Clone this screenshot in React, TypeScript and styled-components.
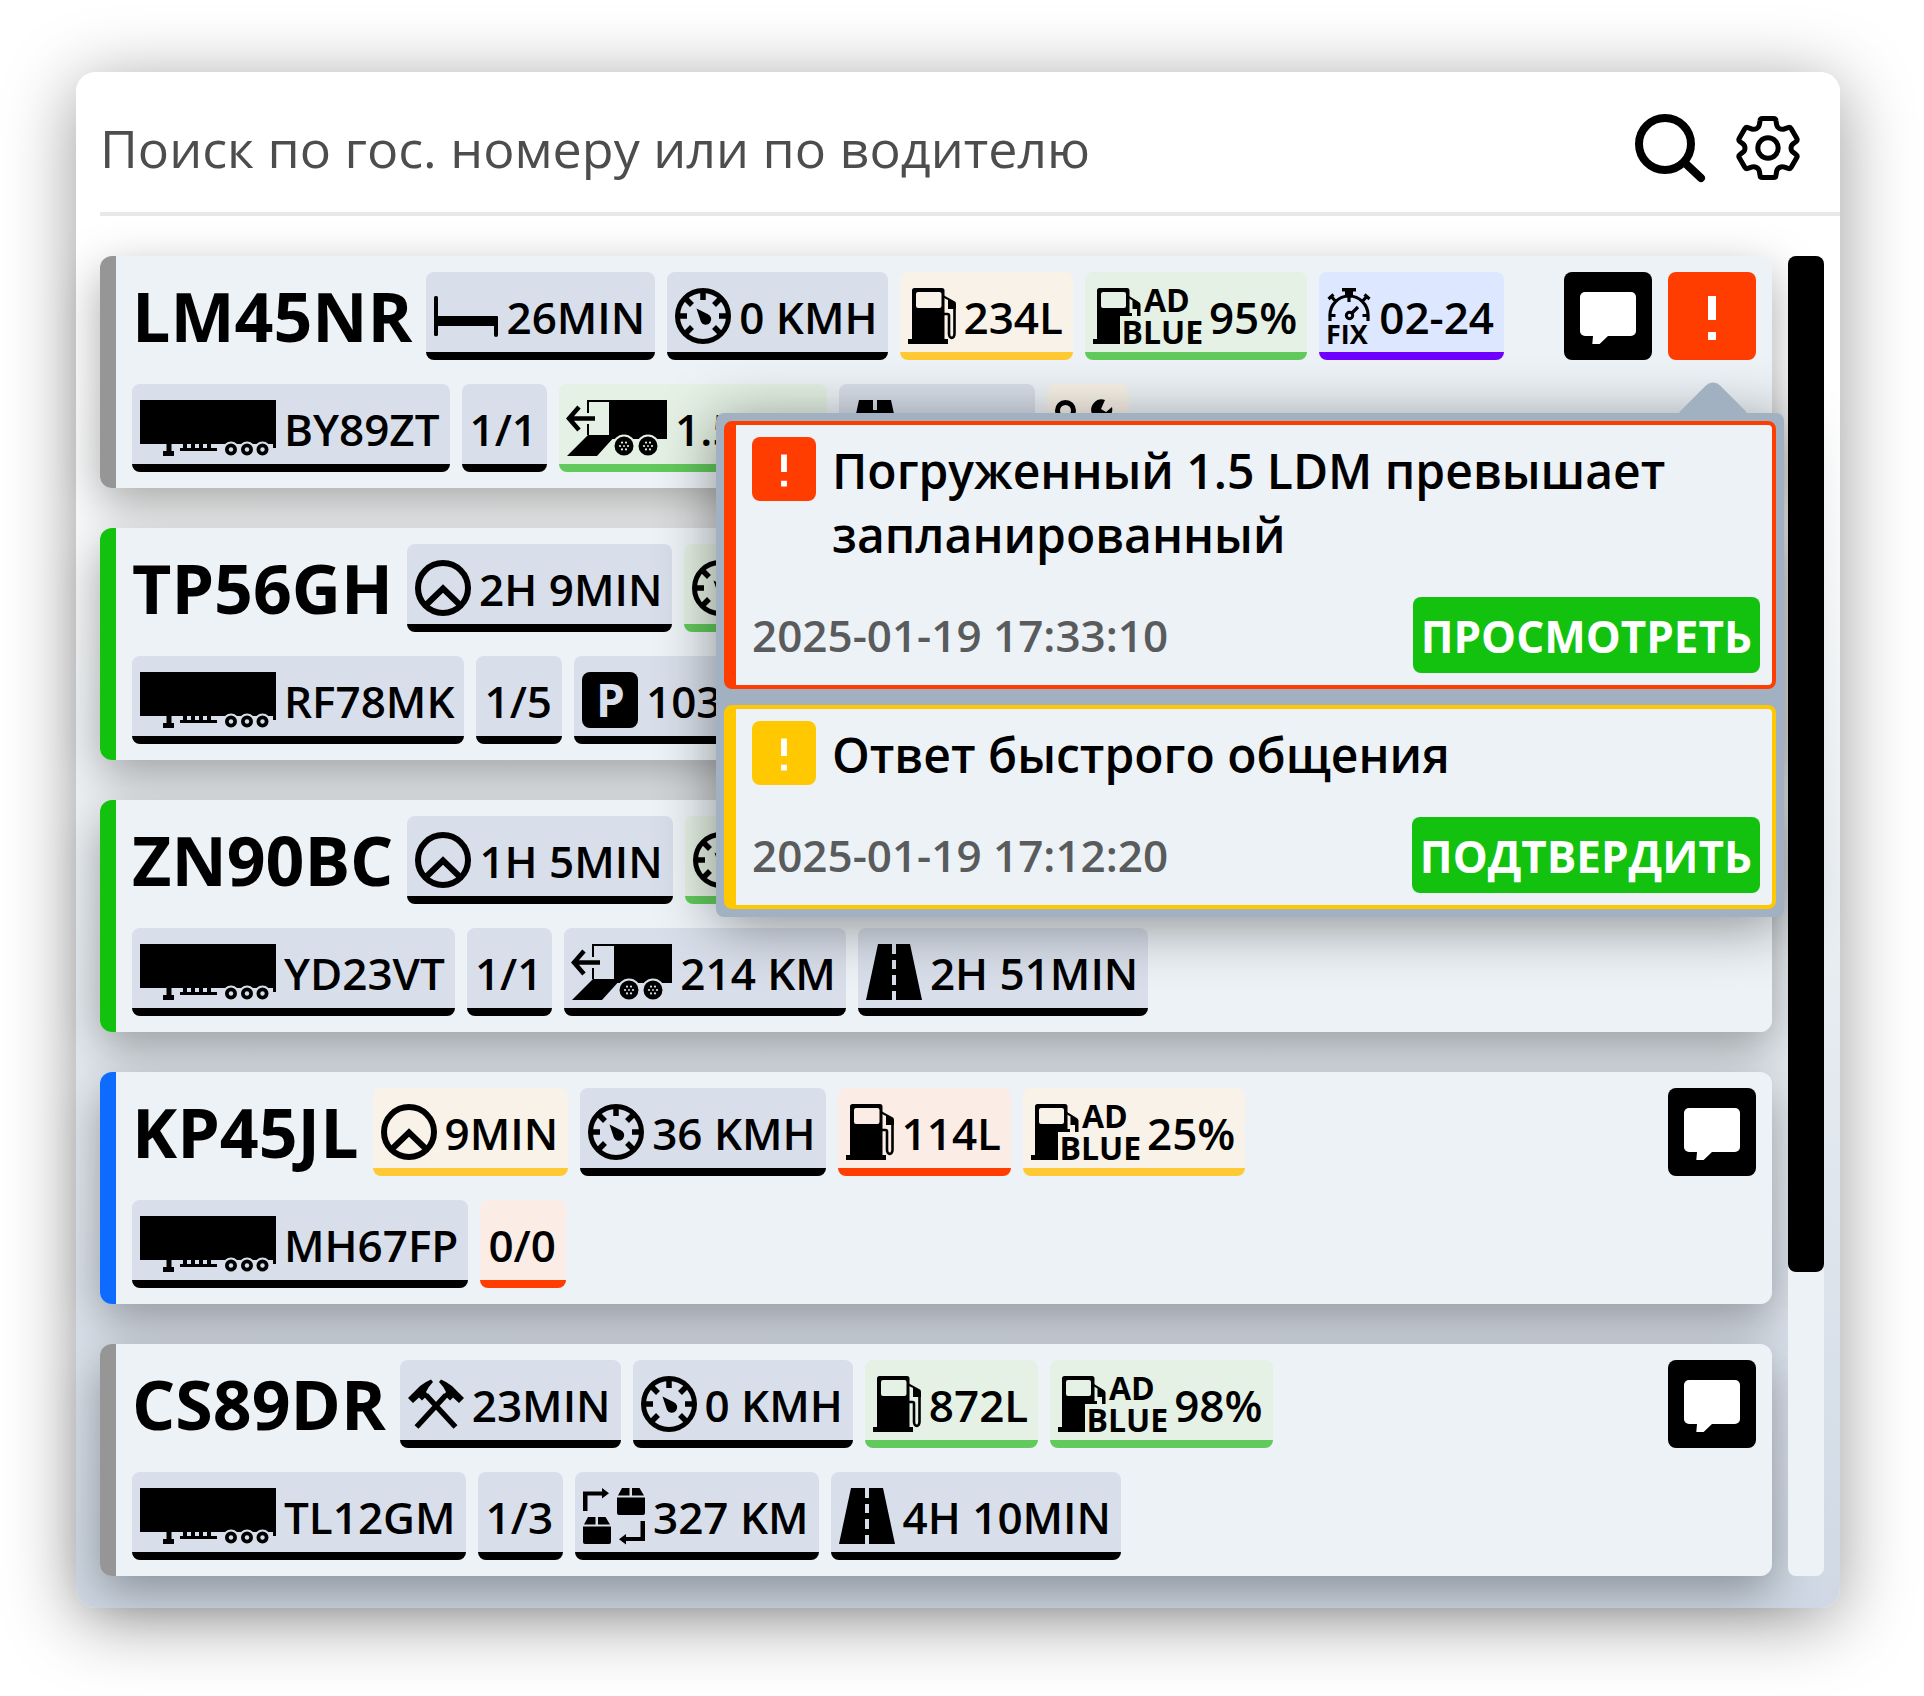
import React from "react";
import styled, { createGlobalStyle, css } from "styled-components";

type Tone = "neutral" | "amber" | "green" | "violet" | "red";
type IconName =
  | "bed"
  | "gauge"
  | "fuel"
  | "adblue"
  | "fix"
  | "trailer"
  | "unload"
  | "road"
  | "service"
  | "wheel"
  | "parking"
  | "hammers"
  | "exchange";

interface ChipData {
  icon?: IconName;
  text?: string;
  tone?: Tone;
}

interface AlertData {
  color: string;
  text: string;
  time: string;
  action: string;
}

interface Vehicle {
  plate: string;
  status: string;
  main: ChipData[];
  extra: ChipData[];
  chat?: boolean;
  alerts?: AlertData[];
}

const tones: Record<Tone, { bg: string; line: string }> = {
  neutral: { bg: "#d8dfea", line: "#000000" },
  amber: { bg: "#f8f2e8", line: "#ffc933" },
  green: { bg: "#e5f1e4", line: "#62c95c" },
  violet: { bg: "#dde7ff", line: "#6f00ff" },
  red: { bg: "#fbece5", line: "#ff3d00" },
};

const GREY = "#969696";
const GREEN = "#13c20e";
const BLUE = "#0d6bff";
const RED = "#ff3d00";
const YELLOW = "#ffc800";

const vehicles: Vehicle[] = [
  {
    plate: "LM45NR",
    status: GREY,
    main: [
      { icon: "bed", text: "26MIN" },
      { icon: "gauge", text: "0 KMH" },
      { icon: "fuel", text: "234L", tone: "amber" },
      { icon: "adblue", text: "95%", tone: "green" },
      { icon: "fix", text: "02-24", tone: "violet" },
    ],
    extra: [
      { icon: "trailer", text: "BY89ZT" },
      { text: "1/1" },
      { icon: "unload", text: "1.5 KM", tone: "green" },
      { icon: "road", text: "2MIN" },
      { icon: "service", tone: "amber" },
    ],
    chat: true,
    alerts: [
      {
        color: RED,
        text: "Погруженный 1.5 LDM превышает запланированный",
        time: "2025-01-19 17:33:10",
        action: "ПРОСМОТРЕТЬ",
      },
      {
        color: YELLOW,
        text: "Ответ быстрого общения",
        time: "2025-01-19 17:12:20",
        action: "ПОДТВЕРДИТЬ",
      },
    ],
  },
  {
    plate: "TP56GH",
    status: GREEN,
    main: [
      { icon: "wheel", text: "2H 9MIN" },
      { icon: "gauge", text: "85 KMH", tone: "green" },
    ],
    extra: [
      { icon: "trailer", text: "RF78MK" },
      { text: "1/5" },
      { icon: "parking", text: "103 KM" },
    ],
  },
  {
    plate: "ZN90BC",
    status: GREEN,
    main: [
      { icon: "wheel", text: "1H 5MIN" },
      { icon: "gauge", text: "82 KMH", tone: "green" },
    ],
    extra: [
      { icon: "trailer", text: "YD23VT" },
      { text: "1/1" },
      { icon: "unload", text: "214 KM" },
      { icon: "road", text: "2H 51MIN" },
    ],
  },
  {
    plate: "KP45JL",
    status: BLUE,
    main: [
      { icon: "wheel", text: "9MIN", tone: "amber" },
      { icon: "gauge", text: "36 KMH" },
      { icon: "fuel", text: "114L", tone: "red" },
      { icon: "adblue", text: "25%", tone: "amber" },
    ],
    extra: [{ icon: "trailer", text: "MH67FP" }, { text: "0/0", tone: "red" }],
    chat: true,
  },
  {
    plate: "CS89DR",
    status: GREY,
    main: [
      { icon: "hammers", text: "23MIN" },
      { icon: "gauge", text: "0 KMH" },
      { icon: "fuel", text: "872L", tone: "green" },
      { icon: "adblue", text: "98%", tone: "green" },
    ],
    extra: [
      { icon: "trailer", text: "TL12GM" },
      { text: "1/3" },
      { icon: "exchange", text: "327 KM" },
      { icon: "road", text: "4H 10MIN" },
    ],
    chat: true,
  },
];

const GlobalStyle = createGlobalStyle`
  *, *::before, *::after { box-sizing: border-box; }
  body {
    margin: 0;
    background: #ffffff;
    color: #000000;
    font-family: "Open Sans", "Noto Sans", sans-serif;
  }
`;

const Page = styled.main`
  padding: 72px 84px 88px 76px;
`;

const Panel = styled.section`
  border-radius: 20px;
  background: linear-gradient(#ffffff 20%, #e9eef2 56%, #dde4ec 77%, #cfd8e4 100%);
  box-shadow: 0 12px 72px rgba(0, 0, 0, 0.4);
`;

const Header = styled.header`
  display: flex;
  align-items: center;
  gap: 30px;
  height: 144px;
  margin-left: 24px;
  padding-top: 12px;
  padding-right: 40px;
  border-bottom: 4px solid #e8e8e8;
`;

const SearchInput = styled.input`
  flex: 1;
  min-width: 0;
  height: 80px;
  padding: 0;
  border: 0;
  outline: 0;
  background: transparent;
  font: 400 52px/80px "Open Sans", "Noto Sans", sans-serif;
  color: #4d4d4d;
  &::placeholder {
    color: #4d4d4d;
    opacity: 1;
  }
`;

const plainButton = css`
  display: flex;
  align-items: center;
  justify-content: center;
  margin: 0;
  padding: 0;
  border: 0;
  cursor: pointer;
`;

const HeaderButton = styled.button`
  ${plainButton}
  background: transparent;
  color: #000000;
`;

const Content = styled.div`
  display: flex;
  gap: 16px;
  padding: 40px 16px 32px 24px;
  isolation: isolate;
`;

const List = styled.ul`
  flex: 1;
  min-width: 0;
  display: flex;
  flex-direction: column;
  gap: 40px;
  margin: 0;
  padding: 0;
  list-style: none;
`;

const Card = styled.li<{ $status: string }>`
  position: relative;
  display: flex;
  justify-content: space-between;
  padding: 16px;
  border-left: 16px solid ${(p) => p.$status};
  border-radius: 12px;
  background: #ecf2f6;
  &::before {
    content: "";
    position: absolute;
    inset: 0 0 0 -16px;
    z-index: -1;
    border-radius: 12px;
    box-shadow: 0 16px 48px rgba(0, 0, 0, 0.34);
  }
`;

const Rows = styled.div`
  display: flex;
  flex-direction: column;
  gap: 24px;
`;

const Row = styled.div`
  display: flex;
  gap: 12px;
`;

const Plate = styled.h2`
  margin: 0 2px 0 0;
  font-size: 68px;
  line-height: 88px;
  font-weight: 700;
`;

const ChipBox = styled.span<{ $tone: Tone }>`
  --chip: ${(p) => tones[p.$tone].bg};
  display: flex;
  gap: 8px;
  height: 88px;
  padding: 16px 10px 8px 8px;
  border-bottom: 8px solid ${(p) => tones[p.$tone].line};
  border-radius: 8px;
  background: var(--chip);
  font-size: 44px;
  line-height: 58px;
  font-weight: 600;
  white-space: nowrap;
`;

const Actions = styled.div`
  position: relative;
  display: flex;
  align-items: flex-start;
  gap: 16px;
`;

const ActionButton = styled.button<{ $bg: string }>`
  ${plainButton}
  width: 88px;
  height: 88px;
  border-radius: 8px;
  background: ${(p) => p.$bg};
`;

const Popup = styled.div`
  position: absolute;
  z-index: 10;
  top: 141px;
  right: -28px;
  width: 1068px;
  display: flex;
  flex-direction: column;
  gap: 16px;
  padding: 8px;
  border-radius: 8px;
  background: #a1b1c2;
  box-shadow: 0 8px 60px rgba(0, 0, 0, 0.42);
  &::before {
    content: "";
    position: absolute;
    z-index: -1;
    top: -23px;
    right: 43px;
    width: 56px;
    height: 56px;
    border-radius: 10px;
    background: #a1b1c2;
    transform: rotate(45deg);
  }
`;

const AlertCard = styled.article<{ $color: string }>`
  display: flex;
  flex-direction: column;
  gap: 32px;
  padding: 12px 12px 12px 16px;
  border: 4px solid ${(p) => p.$color};
  border-left-width: 12px;
  border-radius: 8px;
  background: #ecf2f6;
`;

const AlertTop = styled.div`
  display: flex;
  align-items: flex-start;
  gap: 16px;
`;

const AlertBadge = styled.span<{ $color: string }>`
  flex: none;
  display: flex;
  border-radius: 8px;
  background: ${(p) => p.$color};
`;

const AlertText = styled.p`
  margin: 2px 0 -2px;
  font-size: 48px;
  line-height: 64px;
  font-weight: 600;
`;

const AlertBottom = styled.div`
  display: flex;
  align-items: center;
  justify-content: space-between;
`;

const AlertTime = styled.time`
  font-size: 44px;
  line-height: 76px;
  font-weight: 600;
  color: #595b5c;
`;

const AlertAction = styled.button`
  ${plainButton}
  height: 76px;
  padding: 2px 8px 0;
  border-radius: 8px;
  background: ${GREEN};
  color: #ffffff;
  font: 700 44px/60px "Open Sans", "Noto Sans", sans-serif;
`;

const ScrollTrack = styled.div`
  width: 36px;
  border-radius: 8px;
  background: #ecf2f6;
`;

const ScrollThumb = styled.div`
  height: 77%;
  border-radius: 8px;
  background: #000000;
`;

const IconSvg = styled.svg`
  flex: none;
  display: block;
  overflow: visible;
  text {
    font-family: "Open Sans", "Noto Sans", sans-serif;
    font-weight: 700;
  }
  .cut {
    fill: var(--chip);
  }
  .ring {
    stroke: var(--chip);
  }
`;

const TruckWheel = ({ cx }: { cx: number }) => (
  <g>
    <circle className="ring" cx={cx} cy={46} r={10.5} strokeWidth={2} />
    {[0, 60, 120, 180, 240, 300].map((a) => (
      <circle
        key={a}
        className="cut"
        cx={cx + 4 * Math.cos((a * Math.PI) / 180)}
        cy={46 + 4 * Math.sin((a * Math.PI) / 180)}
        r={1.1}
      />
    ))}
    <circle className="cut" cx={cx} cy={46} r={0.9} />
  </g>
);

const Parcel = ({ x, y }: { x: number; y: number }) => (
  <g transform={`translate(${x} ${y})`}>
    <path d="M5 0h7.5v7.5H1zM15 0h7.5l4.5 7.5H15z" />
    <path d="M0 9.500h28v15.500a2 2 0 0 1-2 2H2a2 2 0 0 1-2-2z" />
  </g>
);

const icons: Record<IconName, { w: number; body: React.ReactNode }> = {
  bed: {
    w: 64,
    body: (
      <>
        <rect x="0" y="8" width="4" height="40" rx="1.500" />
        <path d="M3 28h60a1 1 0 0 1 1 1v18a1 1 0 0 1-4 0v-9H3z" />
      </>
    ),
  },
  gauge: {
    w: 56,
    body: (
      <>
        <circle cx="28" cy="28" r="25.500" fill="none" stroke="#000" strokeWidth="5" />
        <path
          d="M28 3v9M3 28h9M53 28h-9M10 10l7 7M46 10l-7 7M10 46l7-7M46 46l-7-7"
          fill="none"
          stroke="#000"
          strokeWidth="5.500"
        />
        <path d="M21.500 20.500l11 5.500a5.500 5.500 0 1 1-6.500 8z" />
      </>
    ),
  },
  fuel: {
    w: 48,
    body: (
      <>
        <path
          fillRule="evenodd"
          d="M6.500 0H34a2.500 2.500 0 0 1 2.500 2.500V51H40v5H0v-5h4V2.500A2.500 2.500 0 0 1 6.500 0zM10 4a2 2 0 0 0-2 2v12a2 2 0 0 0 2 2h21.500a2 2 0 0 0 2-2V6a2 2 0 0 0-2-2z"
        />
        <path d="M36 7.500l10 5.500a3 3 0 0 1 2 3v5h-8v-9l-4-2z" />
        <path
          d="M36 26h3.500a1.500 1.500 0 0 1 1.500 1.500V46a2.500 3.500 0 0 0 5.500 0V20"
          fill="none"
          stroke="#000"
          strokeWidth="2.600"
        />
      </>
    ),
  },
  adblue: {
    w: 108,
    body: (
      <>
        <path
          fillRule="evenodd"
          d="M6.500 0H34a2.500 2.500 0 0 1 2.500 2.500V28H27v28H0v-5h4V2.500A2.500 2.500 0 0 1 6.500 0zM10 4a2 2 0 0 0-2 2v12a2 2 0 0 0 2 2h21a2 2 0 0 0 2-2V6a2 2 0 0 0-2-2z"
        />
        <path d="M36 8l9 5.500a4 4 0 0 1 2.500 3V28H44v-7h-4.500v-8.500L36 10.500z" />
        <path d="M36 25h3v3h-3z" />
        <text x="51" y="23.500" fontSize="32">
          AD
        </text>
        <text x="28.500" y="55.500" fontSize="32">
          BLUE
        </text>
      </>
    ),
  },
  fix: {
    w: 44,
    body: (
      <>
        <path d="M15 0h14v3.500h-3V8h-8V3.500h-3z" />
        <path
          d="M3 33v-6a19 19 0 0 1 38 0v6M22 7v7M3 27.500h5.500M41 27.500h-5.500M9 14L4 8M35 14l5-6M1.500 11l5-4.500M42.500 11l-5-4.500M25 25l6-6"
          fill="none"
          stroke="#000"
          strokeWidth="3.200"
        />
        <circle cx="22.500" cy="27.500" r="3.200" fill="none" stroke="#000" strokeWidth="3" />
        <text x="-1" y="56" fontSize="27">
          FIX
        </text>
      </>
    ),
  },
  trailer: {
    w: 136,
    body: (
      <>
        <path d="M0 0h136v48h-3v-4H0z" />
        <path d="M26.500 44h5v7H34v5H23v-5h3.500z" />
        <path d="M43 44h4v4h4v-4h4v4h4v-4h4v4h4v-4h4v4h6v3H40v-3h3z" />
        {[91, 107, 122.5].map((cx) => (
          <g key={cx}>
            <circle className="ring" cx={cx} cy="49.500" r="7" strokeWidth="2" />
            <circle className="cut" cx={cx} cy="49.500" r="2.200" />
          </g>
        ))}
      </>
    ),
  },
  unload: {
    w: 100,
    body: (
      <>
        <path d="M20 0h80v39H42V2H22v11h-2zM20 24h2v11h-2z" />
        <path d="M21 35h28L30 56H0z" />
        <path d="M28 18.500H2M12 7L2 18.500L12 30" fill="none" stroke="#000" strokeWidth="4.500" />
        <TruckWheel cx={57} />
        <TruckWheel cx={81} />
      </>
    ),
  },
  road: {
    w: 56,
    body: (
      <>
        <path d="M12 0h32l12 56H0z" />
        <path className="cut" d="M26 0h4v10h-4zM26 16h4v9h-4zM26 31h4v10h-4zM26 47h4v9h-4z" />
      </>
    ),
  },
  service: {
    w: 64,
    body: (
      <>
        <path
          d="M10.500 2.500a8 8 0 0 1 8 8c0 6-8 15-8 15s-8-9-8-15a8 8 0 0 1 8-8z"
          fill="none"
          stroke="#000"
          strokeWidth="5"
        />
        <path d="M50 0a10.500 10.500 0 0 0-13 14l-3 20 6 4 8-18a10.500 10.500 0 0 0 9-13l-6 5-5-3z" />
        <path d="M10 34v16h30" fill="none" stroke="#000" strokeWidth="5" />
      </>
    ),
  },
  wheel: {
    w: 56,
    body: (
      <>
        <circle cx="28" cy="28" r="25" fill="none" stroke="#000" strokeWidth="6" />
        <path d="M11.500 44.500L28 28.500l16.500 16" fill="none" stroke="#000" strokeWidth="6" />
      </>
    ),
  },
  parking: {
    w: 56,
    body: (
      <>
        <rect width="56" height="56" rx="8" />
        <text className="cut" x="14" y="44.500" fontSize="46">
          P
        </text>
      </>
    ),
  },
  hammers: {
    w: 56,
    body: (
      <>
        <path d="M8.500 51L38 19M47.500 51L18 19" fill="none" stroke="#000" strokeWidth="5.500" />
        <path d="M0 22L12 10q5-4 11-6.500l2 2.500q-5 5-7 10l2 2.500-6 6-3-3-6 5.500z" />
        <path d="M56 22L44 10q-5-4-11-6.500L31 6q5 5 7 10l-2 2.500 6 6 3-3 6 5.500z" />
      </>
    ),
  },
  exchange: {
    w: 62,
    body: (
      <>
        <path d="M0 3.500h19V0l7 5.200-7 5.300V7.500H4.500V23H0z" />
        <path d="M62 33v20H43v3.500l-7-5.200 7-5.300v3h14.500V33z" />
        <Parcel x={34} y={0} />
        <Parcel x={0} y={29} />
      </>
    ),
  },
};

const Icon = ({ name }: { name: IconName }) => {
  const { w, body } = icons[name];
  return (
    <IconSvg width={w} height={56} viewBox={`0 0 ${w} 56`} aria-hidden="true">
      {body}
    </IconSvg>
  );
};

const Chip = ({ icon, text, tone = "neutral" }: ChipData) => (
  <ChipBox $tone={tone}>
    {icon && <Icon name={icon} />}
    {text}
  </ChipBox>
);

const Exclamation = ({ size }: { size: number }) => (
  <svg width={size} height={size} viewBox="0 0 88 88" fill="#fff" aria-hidden="true">
    <path d="M40 24h8v24h-8zM40 60h8v8h-8z" />
  </svg>
);

const Bubble = () => (
  <svg width="56" height="56" viewBox="0 0 56 56" fill="#fff" aria-hidden="true">
    <path d="M5 4h46a5 5 0 0 1 5 5v34a5 5 0 0 1-5 5H28L16.500 59q-2.500 1.500-4.500.5L13 48H5a5 5 0 0 1-5-5V9a5 5 0 0 1 5-5z" />
  </svg>
);

const SearchIcon = () => (
  <svg width="72" height="72" viewBox="0 0 72 72" fill="none" stroke="#000" aria-hidden="true">
    <circle cx="31" cy="32" r="26" strokeWidth="8" />
    <path d="M50.500 50.500L67 66" strokeWidth="8" strokeLinecap="round" />
  </svg>
);

const GearIcon = () => (
  <svg
    width="64"
    height="64"
    viewBox="0 0 64 64"
    fill="none"
    stroke="#000"
    strokeWidth="5"
    strokeLinejoin="round"
    aria-hidden="true"
  >
    <path d="M26.500 2.500h11a2.500 2.500 0 0 1 2.500 2.300l.6 3.700c.5 3.600 4.600 5.800 8 4.400l3.400-1.300a2.500 2.500 0 0 1 3.200 1.200l5.500 9.500a2.500 2.500 0 0 1-.7 3.300l-2.800 2.200c-2.900 2.300-2.900 6.500 0 8.500l2.800 2.200a2.500 2.500 0 0 1 .7 3.300l-5.500 9.500a2.500 2.500 0 0 1-3.200 1l-3.400-1.200c-3.400-1.300-7.500.800-8 4.400l-.6 3.700a2.500 2.500 0 0 1-2.500 2.300h-11a2.500 2.500 0 0 1-2.500-2.300l-.6-3.700c-.5-3.600-4.600-5.700-8-4.400l-3.400 1.200a2.500 2.500 0 0 1-3.200-1l-5.500-9.500a2.500 2.500 0 0 1 .7-3.300l2.800-2.200c2.900-2 2.900-6.200 0-8.500l-2.800-2.200a2.500 2.500 0 0 1-.7-3.300l5.500-9.500a2.500 2.500 0 0 1 3.200-1.200l3.400 1.300c3.400 1.400 7.500-.8 8-4.400l.6-3.700a2.500 2.500 0 0 1 2.500-2.300z" />
    <circle cx="32" cy="32" r="10.200" />
  </svg>
);

const AlertItem = ({ color, text, time, action }: AlertData) => (
  <AlertCard $color={color}>
    <AlertTop>
      <AlertBadge $color={color}>
        <Exclamation size={64} />
      </AlertBadge>
      <AlertText>{text}</AlertText>
    </AlertTop>
    <AlertBottom>
      <AlertTime>{time}</AlertTime>
      <AlertAction type="button">{action}</AlertAction>
    </AlertBottom>
  </AlertCard>
);

const VehicleCard = ({ plate, status, main, extra, chat, alerts }: Vehicle) => (
  <Card $status={status}>
    <Rows>
      <Row>
        <Plate>{plate}</Plate>
        {main.map((chip, i) => (
          <Chip key={i} {...chip} />
        ))}
      </Row>
      <Row>
        {extra.map((chip, i) => (
          <Chip key={i} {...chip} />
        ))}
      </Row>
    </Rows>
    <Actions>
      {chat && (
        <ActionButton type="button" $bg="#000000" aria-label="Сообщения">
          <Bubble />
        </ActionButton>
      )}
      {alerts && (
        <>
          <ActionButton type="button" $bg={RED} aria-label="Предупреждения">
            <Exclamation size={88} />
          </ActionButton>
          <Popup>
            {alerts.map((alert) => (
              <AlertItem key={alert.time} {...alert} />
            ))}
          </Popup>
        </>
      )}
    </Actions>
  </Card>
);

export default function App() {
  return (
    <>
      <GlobalStyle />
      <Page>
        <Panel>
          <Header>
            <SearchInput
              type="text"
              aria-label="Поиск по гос. номеру или по водителю"
              placeholder="Поиск по гос. номеру или по водителю"
            />
            <HeaderButton type="button" aria-label="Найти">
              <SearchIcon />
            </HeaderButton>
            <HeaderButton type="button" aria-label="Настройки">
              <GearIcon />
            </HeaderButton>
          </Header>
          <Content>
            <List>
              {vehicles.map((vehicle) => (
                <VehicleCard key={vehicle.plate} {...vehicle} />
              ))}
            </List>
            <ScrollTrack>
              <ScrollThumb />
            </ScrollTrack>
          </Content>
        </Panel>
      </Page>
    </>
  );
}
